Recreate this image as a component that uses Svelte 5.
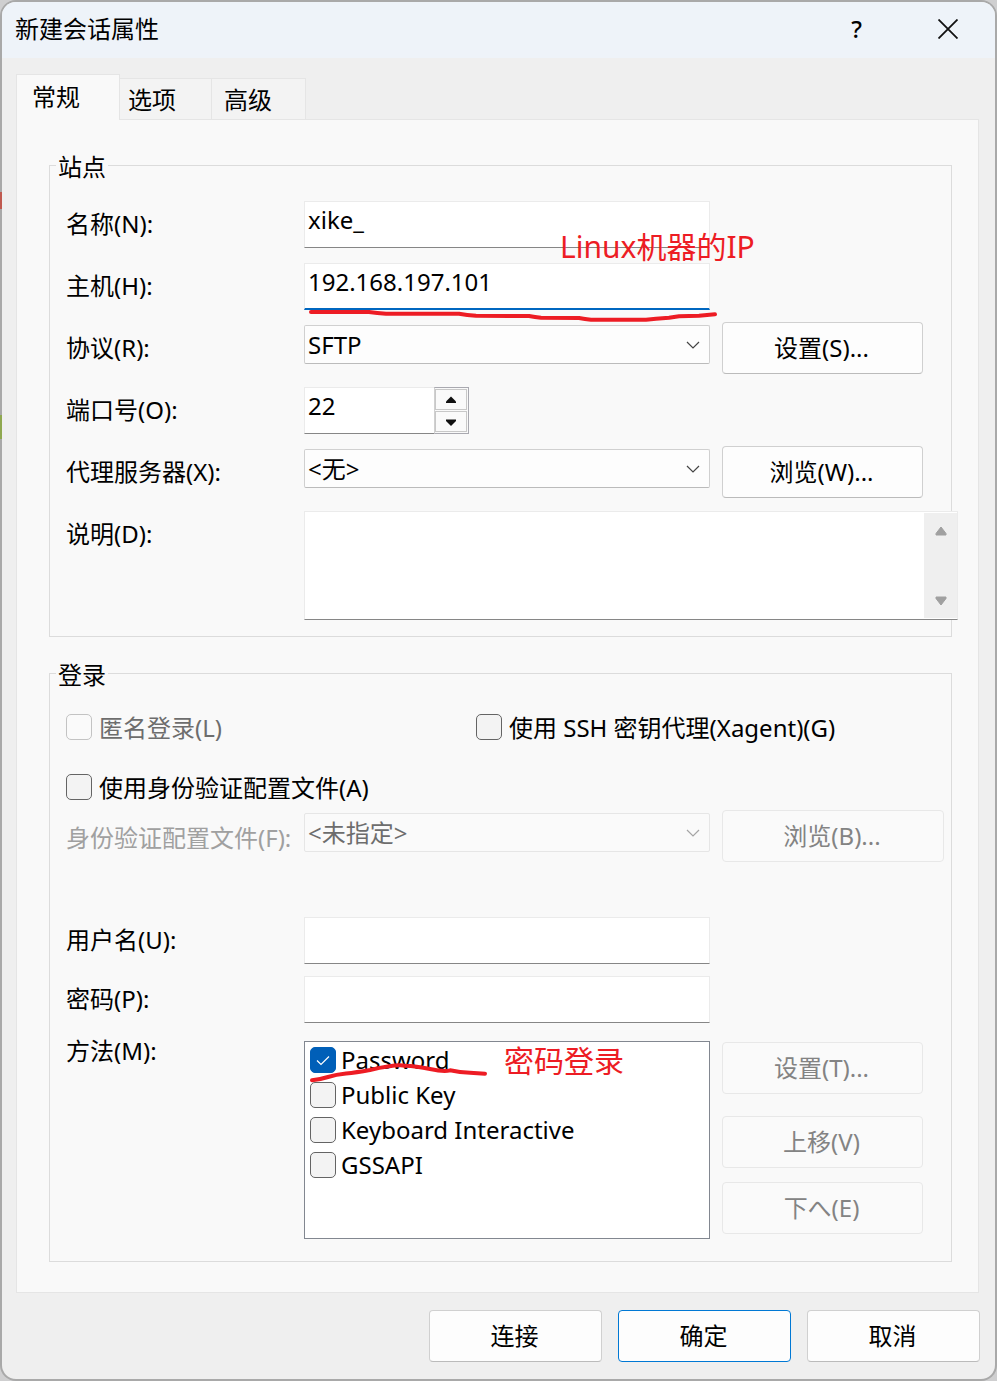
<script lang="ts">
	let tabs = ["常规", "选项", "高级"];
	let active_tab = $state("常规");

	let name = $state("xike_");
	let host = $state("192.168.197.101");
	let protocol = $state("SFTP");
	let port = $state("22");
	let proxy = $state("<无>");
	let description = $state("");

	let use_agent = $state(false);
	let use_profile = $state(false);
	let profile = $state("<未指定>");
	let user = $state("");
	let password = $state("");

	let methods = $state([
		{ label: "Password", checked: true },
		{ label: "Public Key", checked: false },
		{ label: "Keyboard Interactive", checked: false },
		{ label: "GSSAPI", checked: false },
	]);

	function stepPort(step: number) {
		port = String(Math.min(65535, Math.max(1, Number(port) + step)));
	}
</script>

{#snippet chevron()}
	<svg class="chevron" width="14" height="8" viewBox="0 0 14 8" aria-hidden="true">
		<path d="M1 1 L7 7 L13 1" fill="none" stroke="currentColor" stroke-width="1.2" />
	</svg>
{/snippet}

<div class="desktop">
	<main class="window">
		<header>
			<h1>新建会话属性</h1>
			<button class="title-button help" aria-label="帮助">?</button>
			<button class="title-button" aria-label="关闭">
				<svg width="20" height="20" viewBox="0 0 20 20">
					<path d="M0.5 0.5 L19.5 19.5 M19.5 0.5 L0.5 19.5" stroke="#111" stroke-width="1.8" />
				</svg>
			</button>
		</header>

		<div class="content">
			<nav class="tabs">
				{#each tabs as tab}
					<button class="tab" class:active={tab === active_tab} onclick={() => (active_tab = tab)}>{tab}</button>
				{/each}
			</nav>

			<div class="panel">
				<fieldset>
					<legend>站点</legend>
					<div class="row">
						<label for="name">名称(N):</label>
						<input id="name" class="text" type="text" bind:value={name} />
					</div>
					<div class="row">
						<label for="host">主机(H):</label>
						<div class="field">
							<input id="host" class="text focused" type="text" bind:value={host} />
							<span class="note note-host">Linux机器的IP</span>
							<svg class="mark mark-host" width="420" height="16" viewBox="0 0 420 16">
								<path d="M8 5 L66 5 Q74 6 83 6.7 L156 6.7 Q164 8 173 8.7 L226 9 Q232 10 238 10.7 L276 11 Q282 12 288 12.7 L343 12.7 L353 11.7 L366 10.7 L376 9.3 L396 8.7 L412 7.3" />
							</svg>
						</div>
					</div>
					<div class="row">
						<label for="protocol">协议(R):</label>
						<div class="field">
							<select id="protocol" bind:value={protocol}>
								<option>SFTP</option>
								<option>SSH</option>
								<option>TELNET</option>
							</select>
							{@render chevron()}
						</div>
						<button class="button">设置(S)...</button>
					</div>
					<div class="row">
						<label for="port">端口号(O):</label>
						<div class="spinner">
							<input id="port" class="text" type="text" bind:value={port} />
							<div class="steps">
								<button aria-label="增加" onclick={() => stepPort(1)}>
									<svg width="12" height="8" viewBox="0 0 12 8"><path d="M6 0.5 L11 5.5 V7 H1 V5.5 Z" fill="#111" /></svg>
								</button>
								<button aria-label="减少" onclick={() => stepPort(-1)}>
									<svg width="12" height="8" viewBox="0 0 12 8"><path d="M6 8 L11 3 V1.5 H1 V3 Z" fill="#111" /></svg>
								</button>
							</div>
						</div>
					</div>
					<div class="row">
						<label for="proxy">代理服务器(X):</label>
						<div class="field">
							<select id="proxy" bind:value={proxy}>
								<option>&lt;无&gt;</option>
							</select>
							{@render chevron()}
						</div>
						<button class="button">浏览(W)...</button>
					</div>
					<div class="row last">
						<label for="description">说明(D):</label>
						<div class="memo">
							<textarea id="description" bind:value={description}></textarea>
							<div class="scrollbar">
								<svg width="12" height="10" viewBox="0 0 12 10"><path d="M6 1 L11 7.5 V9 H1 V7.5 Z" /></svg>
								<svg width="12" height="10" viewBox="0 0 12 10"><path d="M6 9 L11 2.5 V1 H1 V2.5 Z" /></svg>
							</div>
						</div>
					</div>
				</fieldset>

				<fieldset>
					<legend>登录</legend>
					<div class="checks">
						<label class="check disabled"><input type="checkbox" disabled />匿名登录(L)</label>
						<label class="check"><input type="checkbox" bind:checked={use_agent} />使用 SSH 密钥代理(Xagent)(G)</label>
						<label class="check"><input type="checkbox" bind:checked={use_profile} />使用身份验证配置文件(A)</label>
					</div>
					<div class="row profile">
						<label for="profile" class="disabled">身份验证配置文件(F):</label>
						<div class="field">
							<select id="profile" bind:value={profile} disabled={!use_profile}>
								<option>&lt;未指定&gt;</option>
							</select>
							{@render chevron()}
						</div>
						<button class="button" disabled={!use_profile}>浏览(B)...</button>
					</div>
					<div class="row account">
						<label for="user">用户名(U):</label>
						<input id="user" class="text" type="text" bind:value={user} />
					</div>
					<div class="row account">
						<label for="password">密码(P):</label>
						<input id="password" class="text" type="password" bind:value={password} />
					</div>
					<div class="row methods">
						<span class="caption" id="methods">方法(M):</span>
						<div class="list" role="group" aria-labelledby="methods">
							{#each methods as method}
								<label class="check"><input type="checkbox" bind:checked={method.checked} />{method.label}</label>
							{/each}
							<span class="note note-password">密码登录</span>
							<svg class="mark mark-password" width="190" height="24" viewBox="0 0 190 24">
								<path d="M8 18.3 Q16 17.5 24 15 T42 11.5 T66 8 Q92 2 101 3.7 Q112 4 126 7 T146 8.3 Q156 10.5 166 10.7 L181 11.7" />
							</svg>
						</div>
						<div class="side">
							<button class="button" disabled>设置(T)...</button>
							<button class="button up" disabled>上移(V)</button>
							<button class="button" disabled>下へ(E)</button>
						</div>
					</div>
				</fieldset>
			</div>
		</div>

		<footer>
			<button class="button">连接</button>
			<button class="button default">确定</button>
			<button class="button">取消</button>
		</footer>
	</main>
</div>

<style>
	:global(body) {
		margin: 0;
		background: #cfcfd0;
	}

	.desktop {
		font: 24px/32px "Noto Sans", "Noto Sans CJK SC", sans-serif;
		color: #000;
	}

	.desktop * {
		box-sizing: border-box;
	}

	button,
	input,
	select,
	textarea {
		font: inherit;
		color: inherit;
		margin: 0;
		border-radius: 0;
		outline: none;
	}

	.window {
		border: 2px solid transparent;
		border-radius: 16px;
		background:
			linear-gradient(#efefef, #efefef) padding-box,
			linear-gradient(#c05a50, #c05a50) 0 192px / 2px 17px no-repeat border-box,
			linear-gradient(#8fa850, #8fa850) 0 415px / 2px 24px no-repeat border-box,
			linear-gradient(#a9a9a9, #a9a9a9) border-box;
		overflow: hidden;
	}

	header {
		display: flex;
		height: 56px;
		padding: 0 2px 0 13px;
		background: #eef3f9;
	}

	h1 {
		flex: 1;
		margin: 0;
		font: inherit;
		line-height: 54px;
	}

	.title-button {
		display: flex;
		align-items: center;
		justify-content: center;
		width: 91px;
		height: 54px;
		padding: 0;
		border: none;
		background: none;
	}

	.help {
		font-weight: 500;
	}

	.content {
		padding: 16px 16px 0 14px;
	}

	.tabs {
		display: flex;
		align-items: flex-end;
	}

	.tab {
		width: 94px;
		height: 41px;
		padding: 2px 0 0 12px;
		border: 1px solid #e5e5e5;
		border-left: none;
		border-bottom: none;
		background: #f3f3f3;
		text-align: left;
	}

	.tab.active + .tab {
		width: 92px;
		padding-left: 8px;
	}

	.tab.active {
		position: relative;
		width: 104px;
		height: 46px;
		margin-bottom: -1px;
		padding: 0 0 2px 15px;
		border-left: 1px solid #e5e5e5;
		background: #f9f9f9;
	}

	.panel {
		padding: 28px 26px 30px 32px;
		border: 1px solid #e5e5e5;
		background: #f9f9f9;
	}

	fieldset {
		min-width: 0;
		margin: 0;
		padding: 16px 28px 16px 16px;
		border: 1px solid #dcdcdc;
	}

	fieldset + fieldset {
		margin-top: 19px;
		padding-bottom: 22px;
	}

	legend {
		margin-left: -10px;
		padding: 4px 2px 0;
		line-height: 30px;
	}

	.row {
		display: grid;
		grid-template-columns: 238px minmax(0, 1fr) 201px;
		align-items: start;
		height: 62px;
	}

	.row > label {
		line-height: 52px;
		white-space: nowrap;
	}

	.row.last {
		height: auto;
	}

	.field {
		position: relative;
	}

	.row > .text,
	.row > .field {
		width: calc(100% - 12px);
		margin-top: 3px;
	}

	.text {
		display: block;
		width: 100%;
		height: 47px;
		padding: 0 3px 10px;
		border: 1px solid #ebebeb;
		border-bottom-color: #868686;
		background: #fff;
	}

	.text.focused {
		border-bottom: 2px solid #0067c0;
	}

	select {
		display: block;
		width: 100%;
		height: 39px;
		padding: 0 32px 0 3px;
		border: 1px solid #d0d0d0;
		border-bottom-color: #bbb;
		border-radius: 2px;
		background: #fdfdfd;
		appearance: none;
	}

	select:disabled {
		border-color: #e6e6e6;
		background: #fafafa;
		color: #6d6d6d;
		opacity: 1;
	}

	.chevron {
		position: absolute;
		top: 16px;
		right: 10px;
		color: #444;
		pointer-events: none;
	}

	select:disabled + .chevron {
		color: #a5a5a5;
	}

	.button {
		height: 52px;
		padding: 0 2px 0 0;
		border: 1px solid #d0d0d0;
		border-bottom-color: #bbb;
		border-radius: 4px;
		background: #fdfdfd;
	}

	.button:disabled {
		border-color: #e8e8e8;
		background: #fafafa;
		color: #838383;
	}

	.spinner {
		display: flex;
		width: 165px;
		margin-top: 3px;
	}

	.spinner .text {
		flex: 1;
		min-width: 0;
		border-right: none;
	}

	.steps {
		display: flex;
		flex-direction: column;
		gap: 1px;
		width: 35px;
		padding: 1px 1px 1px 0;
		border: 1px solid #a9a9b0;
		border-left-color: #d0d0d0;
	}

	.steps button {
		display: flex;
		flex: 1;
		align-items: center;
		justify-content: center;
		padding: 0;
		border: 1px solid #c8c8c8;
		background: #fafafa;
	}

	/* the memo hangs over the right edge of the group box */
	.memo {
		position: relative;
		display: flex;
		grid-column: 2 / 4;
		height: 109px;
		margin: 3px -35px 0 0;
		padding: 1px 0;
		border: 1px solid #ebebeb;
		border-bottom-color: #868686;
		background: #fff;
	}

	textarea {
		flex: 1;
		min-width: 0;
		padding: 3px;
		border: none;
		background: none;
		resize: none;
	}

	.scrollbar {
		display: flex;
		flex-direction: column;
		align-items: center;
		justify-content: space-between;
		width: 33px;
		padding: 13px 0 12px;
		background: #efefef;
		fill: #a0a0a0;
	}

	.scrollbar path {
		stroke: #a0a0a0;
		stroke-linejoin: round;
	}

	.checks {
		display: grid;
		grid-template-columns: 410px minmax(0, 1fr);
		row-gap: 16px;
	}

	.check {
		display: flex;
		align-items: center;
		gap: 7px;
		height: 44px;
		white-space: nowrap;
	}

	.check input {
		flex: none;
		width: 26px;
		height: 26px;
		border: 1px solid #646464;
		border-radius: 5px;
		background: #f3f3f3;
		appearance: none;
	}

	.checks input {
		margin-bottom: 2px;
	}

	.check input:disabled {
		border-color: #c3c3c3;
		background: #fafafa;
	}

	.check input:checked {
		border-color: #005fb8;
		background: #005fb8 url("data:image/svg+xml,%3Csvg xmlns='http://www.w3.org/2000/svg' viewBox='0 0 24 24'%3E%3Cpath d='M6 12.5 L10 16.5 L18 8.5' fill='none' stroke='white' stroke-width='1.2'/%3E%3C/svg%3E") center / 24px no-repeat;
	}

	.check.disabled {
		color: #6d6d6d;
	}

	.row > label.disabled {
		color: #a0a0a0;
		line-height: 56px;
	}

	.row.profile {
		height: 104px;
	}

	.profile .button {
		margin-right: -21px;
	}

	.row.account {
		height: 59px;
	}

	.row.methods {
		height: auto;
		margin-top: 9px;
	}

	.caption {
		line-height: 20px;
	}

	.list {
		position: relative;
		height: 198px;
		margin-right: 12px;
		padding-left: 5px;
		border: 1px solid #828790;
		background: #fff;
	}

	.list .check {
		height: 35px;
		gap: 5px;
		line-height: 36px;
	}

	.side {
		display: flex;
		flex-direction: column;
		gap: 14px;
		padding-top: 1px;
	}

	.side .up {
		margin-top: 8px;
	}

	/* red pen notes drawn over the form */
	.note {
		position: absolute;
		color: #ed1c24;
		font-size: 30px;
		line-height: 40px;
		white-space: nowrap;
	}

	.note-host {
		top: -36px;
		left: 256px;
	}

	.note-password {
		top: -1px;
		left: 199px;
	}

	.mark {
		position: absolute;
		fill: none;
		stroke: #ed1c24;
		stroke-width: 4;
		stroke-linecap: round;
		stroke-linejoin: round;
		pointer-events: none;
	}

	.mark-host {
		top: 44px;
		left: -1px;
	}

	.mark-password {
		top: 20px;
		left: -1px;
	}

	footer {
		display: flex;
		justify-content: flex-end;
		gap: 16px;
		padding: 17px 15px;
	}

	footer .button {
		width: 173px;
	}

	.button.default {
		border-color: #0078d4;
	}
</style>
